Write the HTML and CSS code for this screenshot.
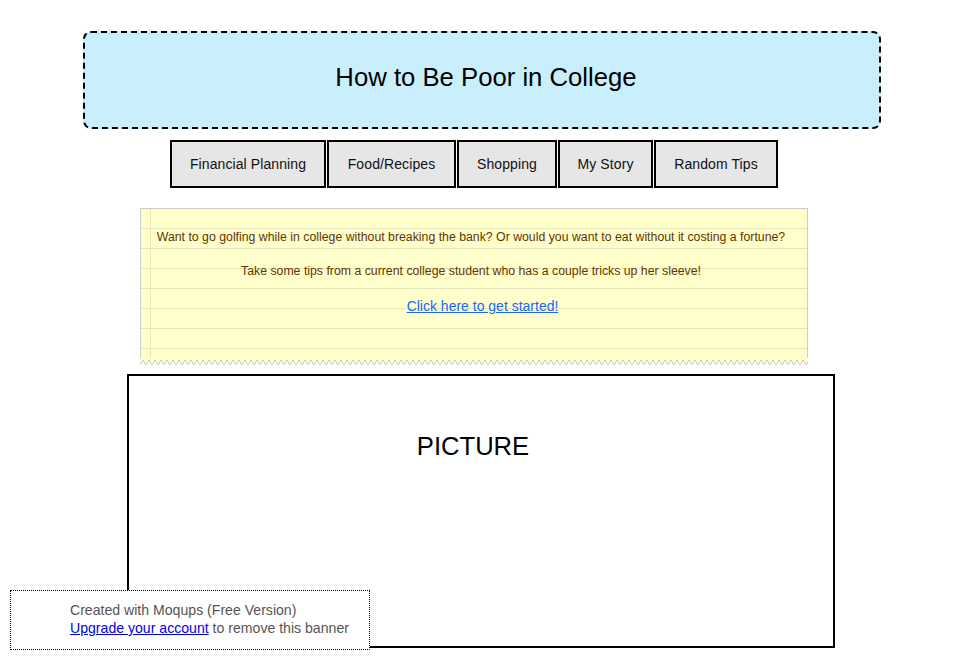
FILE: index.html
```html
<!DOCTYPE html>
<html>
<head>
<meta charset="utf-8">
<title>How to Be Poor in College</title>
<link rel="stylesheet" href="styles.css">
</head>
<body>
<div class="page">
  <header class="title-box">
    <h1 class="title">How to Be Poor in College</h1>
  </header>
  <nav class="nav">
    <a class="nav-btn b1">Financial Planning</a>
    <a class="nav-btn b2">Food/Recipes</a>
    <a class="nav-btn b3">Shopping</a>
    <a class="nav-btn b4">My Story</a>
    <a class="nav-btn b5">Random Tips</a>
  </nav>
  <section class="note">
    <div class="note-body">
      <p class="note-line l1">Want to go golfing while in college without breaking the bank? Or would you want to eat without it costing a fortune?</p>
      <p class="note-line l2">Take some tips from a current college student who has a couple tricks up her sleeve!</p>
      <p class="note-line l3"><a class="note-link" href="#">Click here to get started!</a></p>
    </div>
    <svg class="zigzag" width="100%" height="7" xmlns="http://www.w3.org/2000/svg">
      <defs>
        <pattern id="zz" width="6" height="7" patternUnits="userSpaceOnUse">
          <rect width="6" height="7" fill="#ffffcc"/>
          <path d="M0 7 L3 2 L6 7 Z" fill="#ffffff"/>
          <path d="M0 7 L3 2 L6 7" fill="none" stroke="#c8c8c8" stroke-width="1"/>
        </pattern>
      </defs>
      <rect width="100%" height="7" fill="url(#zz)"/>
    </svg>
  </section>
  <section class="picture">
    <div class="picture-label">PICTURE</div>
  </section>
</div>
<div class="banner">
  <div>Created with Moqups (Free Version)</div>
  <div><a class="banner-link" href="#">Upgrade your account</a> to remove this banner</div>
</div>
</body>
</html>
```

FILE: styles.css
```css
html, body {
  margin: 0;
  padding: 0;
  background: #ffffff;
  font-family: "Liberation Sans", Arial, sans-serif;
}

.page {
  display: flex;
  flex-direction: column;
  align-items: flex-start;
  padding-top: 31px;
}

.title-box {
  box-sizing: border-box;
  margin-left: 83px;
  width: 798px;
  height: 98px;
  border: 2px dashed #000;
  border-radius: 8px;
  background: #c9effd;
  display: flex;
  align-items: center;
  justify-content: center;
}

.title {
  margin: 0 0 6px 8px;
  font-size: 25.7px;
  font-weight: normal;
  color: #000;
}

.nav {
  display: flex;
  margin-top: 11px;
  margin-left: 170px;
  height: 48px;
}

.nav-btn {
  box-sizing: border-box;
  display: flex;
  align-items: center;
  justify-content: center;
  height: 48px;
  border: 2px solid #000;
  margin-right: 1px;
  background: #e6e6e6;
  font-size: 14px;
  letter-spacing: 0.1px;
  color: #111;
  white-space: nowrap;
}

.b1 { width: 156px; }
.b2 { width: 129px; }
.b3 { width: 100px; }
.b4 { width: 95px; }
.b5 { width: 124px; margin-right: 0; }

.note {
  box-sizing: border-box;
  margin-top: 20px;
  margin-left: 140px;
  width: 668px;
  display: flex;
  flex-direction: column;
}

.note-body {
  box-sizing: border-box;
  height: 150px;
  border: 1px solid #cccccc;
  border-bottom: none;
  background-color: #ffffcc;
  background-image:
    linear-gradient(to right, transparent 9px, #f3e3b8 9px, #f3e3b8 10px, transparent 10px),
    repeating-linear-gradient(to bottom, transparent 0, transparent 19px, #e6e4bd 19px, #e6e4bd 20px);
  padding-top: 20px;
  padding-right: 6px;
  display: flex;
  flex-direction: column;
  align-items: center;
}

.note-line {
  margin: 0;
  font-size: 12.3px;
  color: #663300;
  line-height: 16px;
}

.l2 {
  margin-top: 18px;
}

.l3 {
  margin-top: 19px;
  margin-left: 23px;
  font-size: 14px;
}

.note-link {
  color: #1a66ff;
}

.zigzag {
  display: block;
}

.picture {
  box-sizing: border-box;
  margin-top: 9px;
  margin-left: 127px;
  width: 708px;
  height: 274px;
  border: 2px solid #000;
  display: flex;
  justify-content: center;
}

.picture-label {
  margin-top: 56px;
  margin-right: 16px;
  font-size: 25.6px;
  color: #000;
}

.banner {
  position: fixed;
  left: 10px;
  top: 590px;
  box-sizing: border-box;
  width: 360px;
  height: 60px;
  border: 1px dotted #000;
  background: #fff;
  padding: 10px 0 0 59px;
  font-size: 14.1px;
  line-height: 18px;
  color: #555;
}

.banner-link {
  color: #0000ee;
}
```
